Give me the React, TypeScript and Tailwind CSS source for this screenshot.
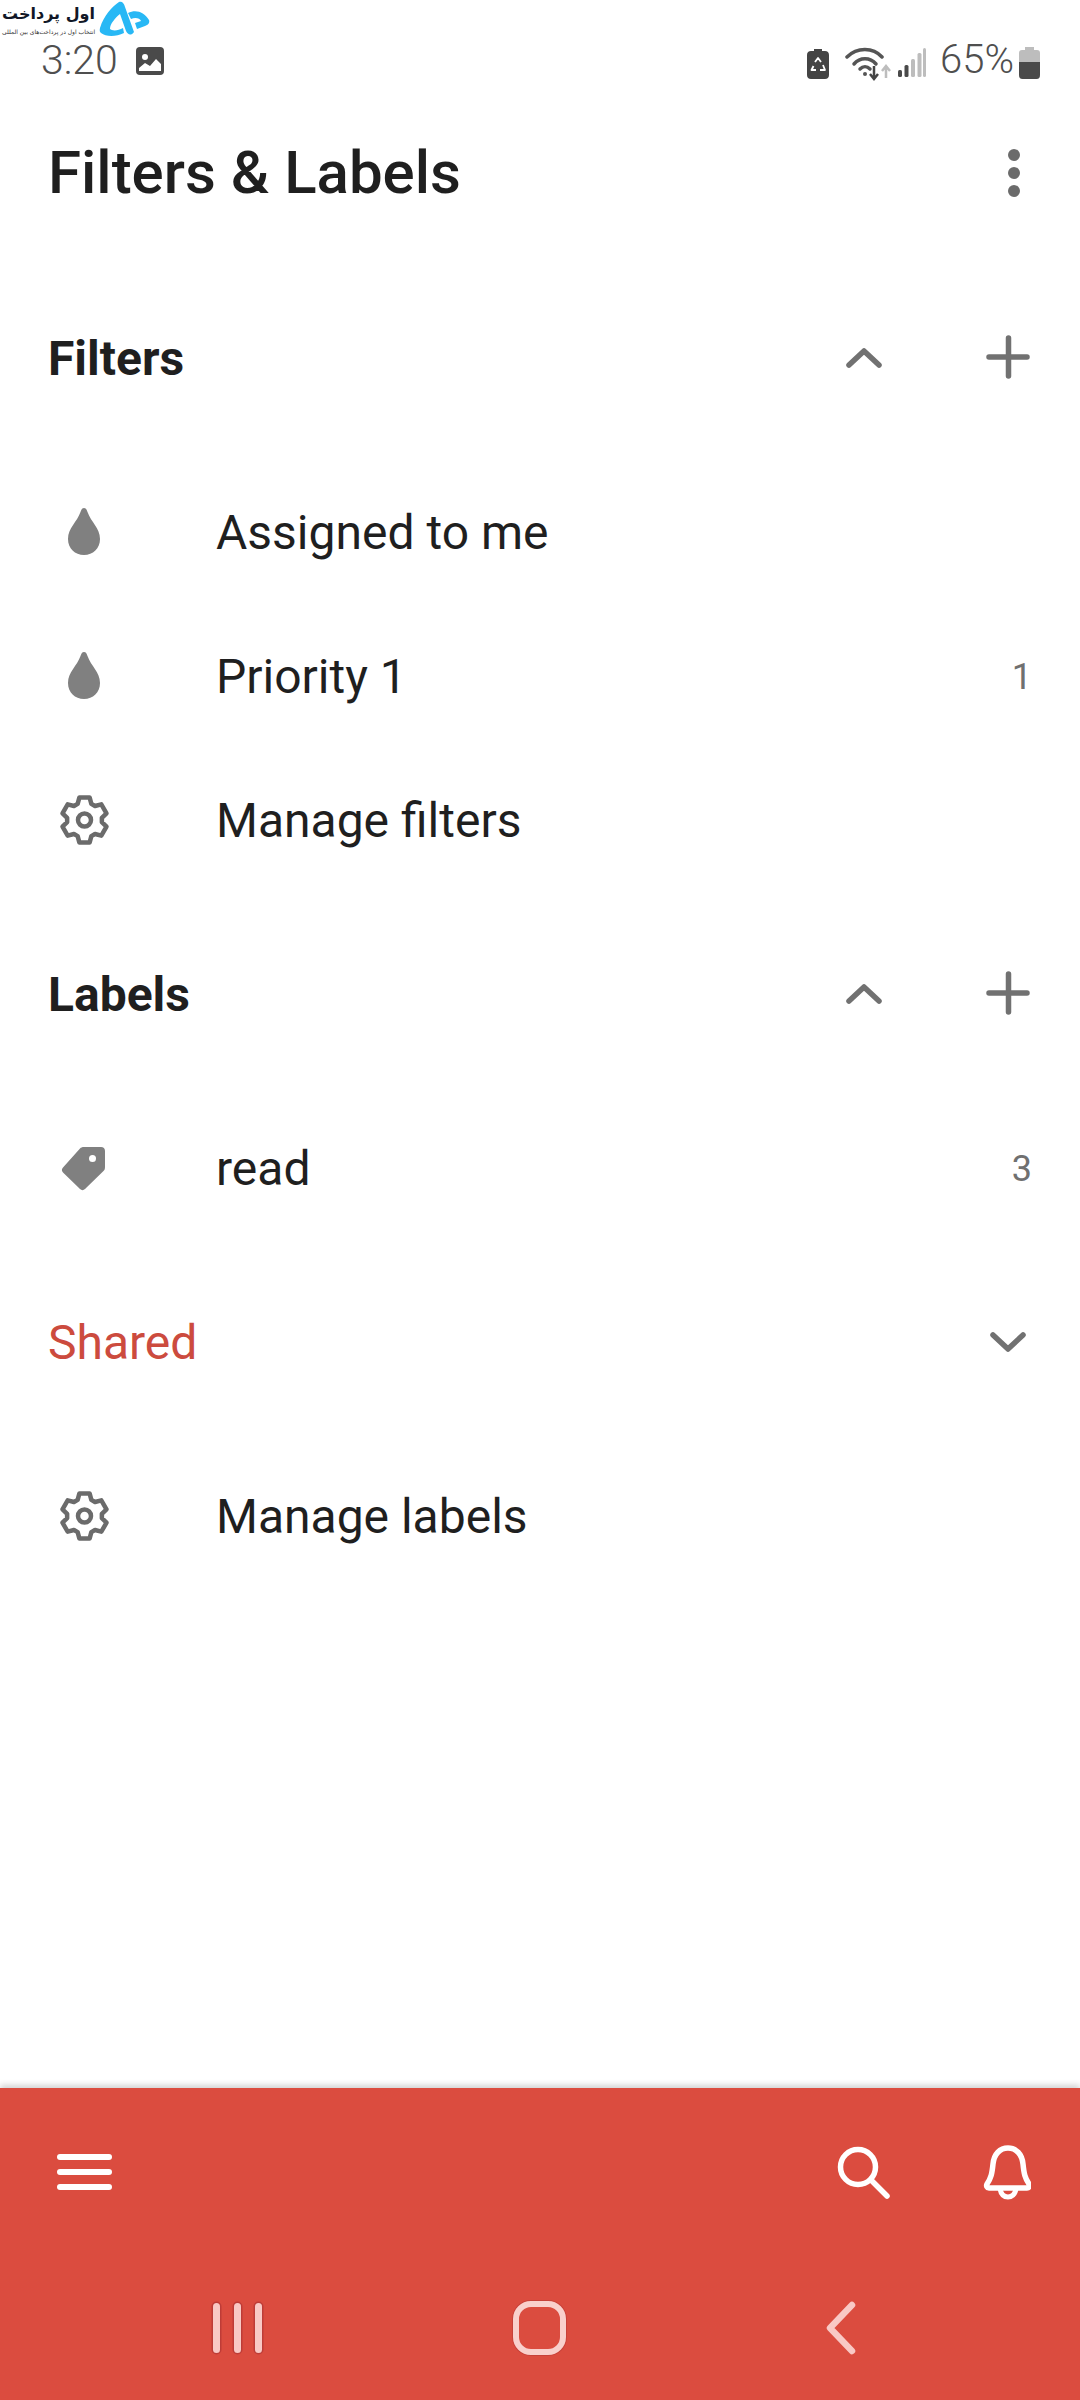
import React from "react";

const FONT = "font-['Roboto','Noto_Sans',sans-serif]";

function gearPath(cx: number, cy: number) {
  const pts: string[] = [];
  const ro = 23;
  const ri = 17.5;
  for (let i = 0; i < 6; i++) {
    const a = (-90 + i * 60) * (Math.PI / 180);
    const e = (13 * Math.PI) / 180;
    const f = (23 * Math.PI) / 180;
    const p = (r: number, t: number) => `${(cx + r * Math.cos(t)).toFixed(2)} ${(cy + r * Math.sin(t)).toFixed(2)}`;
    pts.push(p(ri, a - f), p(ro, a - e), p(ro, a + e), p(ri, a + f));
  }
  return "M" + pts.join("L") + "Z";
}

const Drop = () => (
  <svg width="70" height="60" viewBox="0 0 70 60" className="block">
    <path d="M35 6C37 6 37.500 7.500 38.500 10C42 20 51 26 51 37C51 46.500 44 53 35 53C26 53 19 46.500 19 37C19 26 28 20 31.500 10C32.500 7.500 33 6 35 6Z" fill="#808080" />
  </svg>
);

const Gear = () => (
  <svg width="70" height="60" viewBox="0 0 70 60" className="block">
    <path d={gearPath(35.5, 30)} fill="none" stroke="#6b6b6b" strokeWidth="4.500" strokeLinejoin="round" />
    <circle cx="35.5" cy="30" r="6.500" fill="none" stroke="#6b6b6b" strokeWidth="4.500" />
  </svg>
);

const Tag = () => (
  <svg width="70" height="60" viewBox="0 0 70 60" className="block">
    <path d="M31 10.500C32 9.500 33 9 35 9H52C54.500 9 56 10.500 56 13V29C56 31 55.500 32 54.500 33L36 51C34.500 52.500 32.500 52.500 31 51L14 34.500C12.500 33 12.500 31 14 29.500Z" fill="#808080" />
    <circle cx="43.500" cy="20.500" r="3.500" fill="#fff" />
  </svg>
);

const Chevron = ({ down = false }: { down?: boolean }) => (
  <svg width="40" height="26" viewBox="0 0 40 26" className="block">
    <path d={down ? "M5 6L20 20L35 6" : "M5 20L20 6L35 20"} fill="none" stroke="#717171" strokeWidth="5.500" strokeLinecap="round" strokeLinejoin="round" />
  </svg>
);

const Plus = () => (
  <svg width="48" height="48" viewBox="0 0 48 48" className="block">
    <path d="M24.500 4V42M5 23H43" fill="none" stroke="#717171" strokeWidth="5.500" strokeLinecap="round" />
  </svg>
);

function Row({ icon, label, count }: { icon: React.ReactNode; label: string; count?: string }) {
  return (
    <div className="flex h-[144px] items-center pl-[49px] pr-[48px]">
      <div className="mr-[97px] w-[70px]">{icon}</div>
      <span className="mt-[2px] text-[48px] leading-none text-[#1f1f1f]">{label}</span>
      {count && <span className="ml-auto mt-[2px] text-[36px] leading-none text-[#707070]">{count}</span>}
    </div>
  );
}

function SectionHeader({ label, add = false }: { label: string; add?: boolean }) {
  return (
    <div className="my-[30px] flex h-[144px] items-center pl-[48px] pr-[40px]">
      <span className="mt-[2px] text-[48px] font-bold leading-none text-[#1f1f1f]">{label}</span>
      <div className="ml-auto flex items-center gap-[80px]">
        <div className="flex w-[64px] justify-center"><Chevron /></div>
        {add && <div className="flex w-[64px] justify-center"><Plus /></div>}
      </div>
    </div>
  );
}

function Logo() {
  return (
    <div className="absolute left-0 top-0 h-[40px] w-[152px]">
      <div dir="rtl" className="absolute left-0 top-[1px] w-[97px] whitespace-nowrap text-center font-['DejaVu_Sans',sans-serif] text-[16px] font-bold leading-[26px] text-[#111827]">اول پرداخت</div>
      <div dir="rtl" className="absolute left-0 top-[27px] w-[97px] whitespace-nowrap text-center font-['DejaVu_Sans',sans-serif] text-[6px] leading-[9px] text-[#333]">انتخاب اول در پرداخت‌های بین المللی</div>
      <svg width="54" height="38" viewBox="0 0 54 38" className="absolute left-[98px] top-0">
        <path d="M2 28C6 15 14 7 21 2C24 1 26 3 27 7L36 32C33 36 30 35 28 31L22 14C17 18 12 24 12 29C14 31 20 31 25 28L26 33C18 37 8 37 3 33C1.500 32 1.500 30 2 28Z" fill="#28b8f5" />
        <path d="M30 13C38 9 46 12 51 20C52 23 50 25 47 26L39 29L37 23L43 21C42 18 37 17 33 19Z" fill="#28b8f5" />
      </svg>
    </div>
  );
}

function StatusBar() {
  return (
    <div className="flex h-[90px] items-start pl-[41px] pr-[40px] pt-[38px] text-[#4f4f4f]">
      <span className="text-[41px] font-light leading-[44px]">3:20</span>
      <svg width="28" height="28" viewBox="0 0 28 28" className="ml-[18px] mt-[9px]">
        <rect width="28" height="28" rx="4" fill="#4a4a4a" />
        <circle cx="9" cy="10" r="3" fill="#fff" />
        <path d="M3 24V21L9 16L14 19L20 12L25 17V24Z" fill="#fff" />
      </svg>
      <div className="ml-auto flex items-center">
        <svg width="22" height="30" viewBox="0 0 22 30" className="mt-[8px]">
          <path d="M7 0H15V2H18C20.500 2 22 3.500 22 6V26C22 28.500 20.500 30 18 30H4C1.500 30 0 28.500 0 26V6C0 3.500 1.500 2 4 2H7Z" fill="#444" />
          <path d="M8 13L11 9L14 13M16 16L18 21H13M9 21H4.500L6.500 17" fill="none" stroke="#fff" strokeWidth="1.800" strokeLinejoin="round" />
        </svg>
        <svg width="46" height="34" viewBox="0 0 46 34" className="ml-[16px] mt-[8px]">
          <path d="M2 10C12 0 28 0 37 10" fill="none" stroke="#555" strokeWidth="3.500" strokeLinecap="round" />
          <path d="M9 17C15 10 25 10 31 17" fill="none" stroke="#555" strokeWidth="3.500" strokeLinecap="round" />
          <path d="M15 22C18 19 22 19 25 22" fill="none" stroke="#555" strokeWidth="3.500" strokeLinecap="round" />
          <circle cx="20" cy="27" r="2" fill="#555" />
          <path d="M29 19V31M25 27L29 32L33 27" fill="none" stroke="#444" strokeWidth="2.500" />
          <path d="M41 31V20M37 24L41 19L45 24" fill="none" stroke="#bdbdbd" strokeWidth="2.500" />
        </svg>
        <svg width="28" height="30" viewBox="0 0 28 30" className="ml-[7px] mt-[6px]">
          <rect x="0" y="22" width="4" height="7" rx="1.500" fill="#4a4a4a" />
          <rect x="6.500" y="17" width="4" height="12" rx="1.500" fill="#4a4a4a" />
          <rect x="13" y="11" width="4" height="18" rx="1.500" fill="#bdbdbd" />
          <rect x="19.500" y="5" width="4" height="24" rx="1.500" fill="#bdbdbd" />
          <rect x="25" y="0" width="3" height="29" rx="1.500" fill="#bdbdbd" />
        </svg>
        <span className="ml-[14px] text-[40px] font-light leading-[44px]">65%</span>
        <svg width="21" height="32" viewBox="0 0 21 32" className="ml-[5px] mt-[6px]">
          <path d="M6 0H15V3H18C20 3 21 4 21 6V15H0V6C0 4 1 3 3 3H6Z" fill="#bdbdbd" />
          <path d="M0 15H21V28C21 30.500 20 32 17.500 32H3.500C1 32 0 30.500 0 28Z" fill="#4a4a4a" />
        </svg>
      </div>
    </div>
  );
}

export default function App() {
  return (
    <div className={`relative flex h-[2400px] w-[1080px] flex-col overflow-hidden bg-white ${FONT}`}>
      <Logo />
      <StatusBar />
      <header className="flex h-[166px] items-center pl-[48px] pr-[60px]">
        <h1 className="text-[60px] font-medium leading-none text-[#1f1f1f]">Filters &amp; Labels</h1>
        <div className="ml-auto flex flex-col gap-[6px]">
          <span className="block h-[12px] w-[12px] rounded-full bg-[#6b6b6b]" />
          <span className="block h-[12px] w-[12px] rounded-full bg-[#6b6b6b]" />
          <span className="block h-[12px] w-[12px] rounded-full bg-[#6b6b6b]" />
        </div>
      </header>
      <main className="flex-1">
        <SectionHeader label="Filters" add />
        <Row icon={<Drop />} label="Assigned to me" />
        <Row icon={<Drop />} label="Priority 1" count="1" />
        <Row icon={<Gear />} label="Manage filters" />
        <SectionHeader label="Labels" add />
        <Row icon={<Tag />} label="read" count="3" />
        <div className="my-[30px] flex h-[144px] items-center pl-[48px] pr-[40px]">
          <span className="mt-[2px] text-[48px] leading-none text-[#cc4b3e]">Shared</span>
          <div className="ml-auto flex w-[64px] justify-center"><Chevron down /></div>
        </div>
        <Row icon={<Gear />} label="Manage labels" />
      </main>
      <footer className="bg-[#db4c3f] shadow-[0_-3px_6px_rgba(0,0,0,0.18)]">
        <div className="flex h-[168px] items-center pl-[57px] pr-[49px]">
          <div className="flex w-[55px] flex-col gap-[9px]">
            <span className="block h-[6px] rounded-full bg-white" />
            <span className="block h-[6px] rounded-full bg-white" />
            <span className="block h-[6px] rounded-full bg-white" />
          </div>
          <svg width="56" height="56" viewBox="0 0 56 56" className="ml-auto">
            <circle cx="23" cy="23" r="17.500" fill="none" stroke="#fff" strokeWidth="5.500" />
            <path d="M36 36L52 52" stroke="#fff" strokeWidth="5.500" strokeLinecap="round" />
          </svg>
          <svg width="50" height="56" viewBox="0 0 50 56" className="ml-[90px]">
            <path d="M8 44H46C48 44 49 42 48 40C44 34 43 30 42 20C41 10 35 4 27 4C19 4 13 10 12 20C11 30 10 34 6 40C5 42 6 44 8 44Z" fill="none" stroke="#fff" strokeWidth="5.500" strokeLinejoin="round" />
            <path d="M19 45C20 50 23 53 27 53C31 53 34 50 35 45" fill="none" stroke="#fff" strokeWidth="5" />
          </svg>
        </div>
        <div className="flex h-[144px] items-center">
          <div className="flex w-[1080px] items-center">
            <div className="ml-[213px] flex w-[49px] justify-between">
              <span className="block h-[50px] w-[7px] rounded-full bg-[#f9c9c5] shadow-[0_0_0_1.500px_rgba(170,50,50,0.6)]" />
              <span className="block h-[50px] w-[7px] rounded-full bg-[#f9c9c5] shadow-[0_0_0_1.500px_rgba(170,50,50,0.6)]" />
              <span className="block h-[50px] w-[7px] rounded-full bg-[#f9c9c5] shadow-[0_0_0_1.500px_rgba(170,50,50,0.6)]" />
            </div>
            <div className="ml-[251px] h-[54px] w-[53px] rounded-[18px] border-[6px] border-[#f9d0cc] shadow-[0_0_0_1px_rgba(170,50,50,0.4)]" />
            <svg width="32" height="54" viewBox="0 0 32 54" className="ml-[259px]">
              <path d="M27 4L5 27L27 50" fill="none" stroke="#f9c9c5" strokeWidth="6.500" strokeLinecap="round" strokeLinejoin="round" />
            </svg>
          </div>
        </div>
      </footer>
    </div>
  );
}
